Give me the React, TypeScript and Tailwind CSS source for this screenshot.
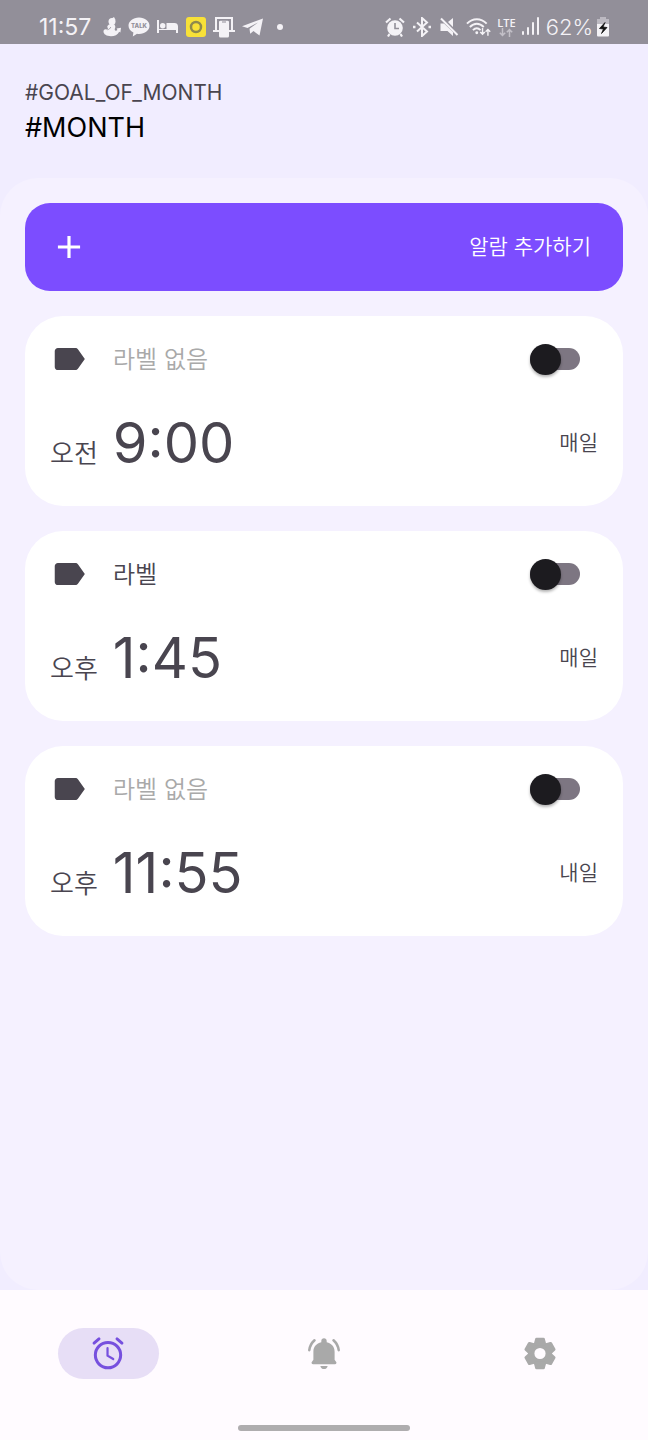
import React, { useState } from "react";
import { MdAdd, MdLabel } from "react-icons/md";

interface IAlarm {
  id: number;
  label: string;
  period: string;
  time: string;
  repeat: string;
  active: boolean;
}

const initialAlarms: IAlarm[] = [
  { id: 1, label: "", period: "오전", time: "9:00", repeat: "매일", active: false },
  { id: 2, label: "라벨", period: "오후", time: "1:45", repeat: "매일", active: false },
  { id: 3, label: "", period: "오후", time: "11:55", repeat: "내일", active: false },
];

const StatusBar: React.FC = () => {
  return (
    <div className="flex h-11 items-center justify-between bg-[#928f99] pl-[39px] pr-[38px] pt-[9px] text-[#f4f2f6]">
      <div className="flex items-center gap-[7px]">
        <span className="mr-[5px] text-[23px] leading-7">11:57</span>
        {/* app notifications */}
        <svg width="18" height="20" viewBox="0 0 18 20" fill="currentColor">
          <circle cx="9" cy="4.500" r="3.500" />
          <path d="M8 2l3-2 1.500 3z" />
          <path d="M6 7.500c2-1.200 5.500-1 6.200 1.500.5 1.700-.8 2.800-.4 4 .5 1.200 1.800.8 2.600 0l-.8-1.500 4.400-.7-.6 4.700-1.200-.8c-1.500 3-4.500 4.600-8.200 4.600-4.500 0-7.500-2-7.500-4.700 0-2 1.500-2.700 3-2.200 1.200.3 1.700-.6 1.300-1.500C4 10 4 8.700 6 7.500z" />
          <path d="M4.500 12.800c1.500-.3 2.700-1.300 3.300-2.800" fill="none" stroke="#928f99" strokeWidth="0.8" />
        </svg>
        <svg width="22" height="20" viewBox="0 0 22 20">
          <path
            d="M11 .5c6 0 10.500 3.700 10.500 8.300S17 17 11 17c-.7 0-1.400 0-2-.2L4.800 19.500l.6-4C2.500 14.200.5 11.700.5 8.800.5 4.200 5 .5 11 .5z"
            fill="currentColor"
          />
          <text x="11" y="11" textAnchor="middle" fontSize="6" fontWeight="800" fill="#928f99">
            TALK
          </text>
        </svg>
        <svg width="22" height="20" viewBox="0 0 22 20" fill="currentColor">
          <path d="M0 3h2v10h17v3h2V9.500C21 7 19.500 6 17.500 6H9.500v6H2v4H0z" />
          <circle cx="5.700" cy="8.700" r="2.700" />
        </svg>
        <svg width="20" height="20" viewBox="0 0 20 20">
          <rect width="20" height="20" rx="3" fill="#f8e138" />
          <circle cx="10" cy="10" r="5" fill="none" stroke="#8f8a4d" strokeWidth="2.500" />
        </svg>
        <svg width="22" height="22" viewBox="0 0 22 22" fill="none">
          <path d="M3 14V2h16v12" stroke="currentColor" strokeWidth="2" />
          <path d="M0 15h6M16 15h6" stroke="currentColor" strokeWidth="2" />
          <rect x="6" y="4.500" width="10" height="17" rx="1.500" fill="currentColor" />
          <path d="M5.500 14V5.500q0-1.500 1.500-1.500h8q1.500 0 1.500 1.500V14" stroke="#928f99" />
          <path d="M9 6h4" stroke="#928f99" />
        </svg>
        <svg width="22" height="20" viewBox="0 0 22 20" fill="currentColor">
          <path d="M21 1.500L17.500 18.500l-6-4.500-3.300 2.700-.7-4.900L16 5.500 5.500 11 0 9.200z" />
        </svg>
        <span className="ml-[6px] size-[6px] rounded-full bg-current" />
      </div>
      <div className="flex items-center gap-[6px]">
        {/* system indicators */}
        <svg width="22" height="20" viewBox="-1 0 22 20" fill="currentColor">
          <circle cx="10" cy="11" r="7.800" />
          <path d="M1 5.500L5.500 1.500M19 5.500L14.500 1.500M4.500 17l-1.500 2.500M15.500 17l1.500 2.500" stroke="currentColor" strokeWidth="2.200" />
          <path d="M10 6v5.500h4" fill="none" stroke="#928f99" strokeWidth="1.600" />
        </svg>
        <svg width="20" height="20" viewBox="0 0 20 20" fill="none" stroke="currentColor" strokeWidth="2">
          <path d="M5 5.500l10 9-5 4.500V1l5 4.500-10 9" />
          <path d="M1 10h2.500M16.500 10H19" strokeWidth="2.400" />
        </svg>
        <svg width="22" height="20" viewBox="-1 0 22 20" fill="currentColor">
          <path d="M1.500 6.500H5l9 8.500v4L8.500 14h-7zM9 5l5-4v9z" />
          <path d="M2 1.500L18.500 18" stroke="currentColor" strokeWidth="2" />
        </svg>
        <svg width="25" height="20" viewBox="0 0 26 20" fill="none" stroke="currentColor" strokeWidth="2">
          <path d="M1 6.500C7 .3 15.500.3 21.500 6.500M4 10c4.500-4.500 10-4.500 14.500 0M7.200 13.300c2.500-2.400 5.500-2.400 8 0" />
          <circle cx="11.200" cy="16" r="1.500" fill="currentColor" stroke="none" />
          <path d="M17.200 11v6.500m-2.400-2.300l2.400 2.400 2.400-2.400M22.800 19v-6.500m-2.400 2.400l2.400-2.400 2.400 2.400" strokeWidth="1.500" />
        </svg>
        <span className="flex flex-col items-center">
          <span className="font-['Open_Sans',sans-serif] text-[11px] leading-[11px] font-semibold">LTE</span>
          <svg width="14" height="9" viewBox="0 0 14 9" fill="none" stroke="#c3c0c8" strokeWidth="1.500">
            <path d="M3.500 0v7.500M.8 4.800l2.700 2.700 2.700-2.700M10.500 9V1.500M7.800 4.200l2.700-2.700 2.700 2.700" />
          </svg>
        </span>
        <svg width="18" height="19" viewBox="0 0 18 19" fill="currentColor">
          <rect x="0" y="14" width="2" height="4" rx="1" />
          <rect x="5" y="10" width="2" height="8" rx="1" />
          <rect x="10" y="5" width="2" height="13" rx="1" />
          <rect x="15" y="0" width="2" height="18" rx="1" />
        </svg>
        <span className="flex items-center gap-[3px]">
          <span className="text-[22px] leading-7 font-[350]">62%</span>
          <svg width="14" height="20" viewBox="0 0 14 20">
            <path d="M4 0h6v2h3v5H1V2h3z" fill="#bcb9c1" />
            <path d="M1 7h12v11.500q0 1-1 1H2q-1 0-1-1z" fill="currentColor" />
            <path d="M9 5.500L3.500 11.500l4 .5L5.500 16.500l5.500-6L7 10z" fill="#111" stroke="#111" strokeWidth="0.800" />
          </svg>
        </span>
      </div>
    </div>
  );
};

interface IAlarmCardProps {
  alarm: IAlarm;
  onToggle: (id: number) => void;
}

const AlarmCard: React.FC<IAlarmCardProps> = ({ alarm, onToggle }) => {
  return (
    <li className="flex h-[190px] flex-col rounded-[38px] bg-white px-[25px] pt-6 text-[#49454f]">
      <div className="flex h-[38px] items-center">
        <MdLabel size={38} />
        <span
          className={
            alarm.label
              ? "mt-[2px] ml-[25px] text-2xl font-[350]"
              : "mt-[2px] ml-[25px] text-2xl font-[350] text-[#a9a9a9]"
          }
        >
          {alarm.label || "라벨 없음"}
        </span>
        <input
          type="checkbox"
          role="switch"
          aria-label={`${alarm.period} ${alarm.time}`}
          checked={alarm.active}
          onChange={() => onToggle(alarm.id)}
          className="mr-[18px] ml-auto flex h-[22px] w-[50px] cursor-pointer appearance-none items-center rounded-full bg-[#7d7682] before:size-[31px] before:shrink-0 before:rounded-full before:bg-[#1c1b1f] before:shadow-[0_2px_3px_rgba(0,0,0,0.3)] checked:bg-[#b79dff] checked:before:ml-auto checked:before:bg-[#7c4dff]"
        />
      </div>
      <div className="mt-[29px] flex items-center justify-between">
        <div className="flex items-baseline gap-[15px]">
          <span className="text-[26px] font-[350]">{alarm.period}</span>
          <span className="text-[56px] leading-[72px]">{alarm.time}</span>
        </div>
        <span className="text-[21px] font-[350]">{alarm.repeat}</span>
      </div>
    </li>
  );
};

const BottomNav: React.FC = () => {
  return (
    <nav className="flex h-[150px] flex-col bg-[#fffbff] text-[#a9a9a9]">
      <div className="mt-[38px] grid grid-cols-3">
        <a href="#alarm" aria-label="알람" className="mx-auto flex h-[51px] w-[101px] items-center justify-center rounded-full bg-[#e7def6] text-[#7650de]">
          <svg width="38" height="38" viewBox="0 0 24 24" fill="none" stroke="currentColor" strokeLinecap="round">
            <circle cx="12" cy="12.700" r="8" strokeWidth="1.900" />
            <path d="M3.200 5.100l3.100-2.600M20.800 5.100l-3.100-2.600" strokeWidth="1.900" />
            <path d="M11.700 8.300v4.700l3.600 2.200" strokeWidth="1.400" />
          </svg>
        </a>
        <a href="#notification" aria-label="알림" className="mx-auto flex h-[51px] w-[101px] items-center justify-center">
          <svg width="38" height="38" viewBox="0 0 24 24" fill="currentColor">
            <path d="M18.700 15.700V10.500c0-3-1.900-5.200-5-5.900V3.800c0-1-.7-1.700-1.700-1.700s-1.700.7-1.700 1.700v.8c-3.100.7-5 2.900-5 5.900v5.200l-.9 1.200c-.6.600-.2 1.600.7 1.600h13.800c.9 0 1.300-1 .7-1.600z" />
            <path d="M9.700 19.500h4.600c-.2 1.200-1.100 2-2.300 2s-2.100-.8-2.300-2z" />
            <path d="M6 3.300C4.100 5 3 7 2.700 9.600M18 3.300c1.900 1.700 3 3.700 3.300 6.300" fill="none" stroke="currentColor" strokeWidth="1.600" strokeLinecap="round" />
          </svg>
        </a>
        <a href="#settings" aria-label="설정" className="mx-auto flex h-[51px] w-[101px] items-center justify-center">
          <svg width="40" height="40" viewBox="0 0 40 40" fill="currentColor">
            <circle cx="20" cy="19.500" r="8.800" fill="none" stroke="currentColor" strokeWidth="6.400" />
            {[0, 60, 120, 180, 240, 300].map((angle) => (
              <path
                key={angle}
                d="M14 9.300l1.100-4.300q.2-1.200 1.400-1.200h7q1.200 0 1.400 1.200l1.100 4.300-1.500 2h-9z"
                transform={`rotate(${angle} 20 19.500)`}
              />
            ))}
          </svg>
        </a>
      </div>
      <div className="mx-auto mt-auto mb-[9px] h-[6px] w-[172px] rounded-full bg-[#afadaf]" />
    </nav>
  );
};

const App: React.FC = () => {
  const [alarms, setAlarms] = useState<IAlarm[]>(initialAlarms);

  const handleToggle = (id: number) => {
    setAlarms(
      alarms.map((alarm) =>
        alarm.id === id ? { ...alarm, active: !alarm.active } : alarm
      )
    );
  };

  return (
    <div className="flex min-h-screen flex-col bg-[#f1edff] font-['Inter','Noto_Sans_CJK_KR',sans-serif]">
      <StatusBar />
      <header className="px-[25px] pt-[33px] pb-8">
        <p className="text-[21px] leading-8 text-[#49454f]">#GOAL_OF_MONTH</p>
        <h1 className="pt-px text-[27px] leading-9 text-black">#MONTH</h1>
      </header>
      <main className="grow rounded-[38px] bg-[#f5f1ff] p-[25px]">
        <button
          type="button"
          className="flex h-[88px] w-full cursor-pointer items-center justify-between rounded-[25px] bg-[#7c4dff] pr-8 pl-[25px] text-white"
        >
          <MdAdd size={38} />
          <span className="text-[21px] font-[350]">알람 추가하기</span>
        </button>
        <ul className="mt-[25px] flex flex-col gap-[25px]">
          {alarms.map((alarm) => (
            <AlarmCard key={alarm.id} alarm={alarm} onToggle={handleToggle} />
          ))}
        </ul>
      </main>
      <BottomNav />
    </div>
  );
};

export default App;
